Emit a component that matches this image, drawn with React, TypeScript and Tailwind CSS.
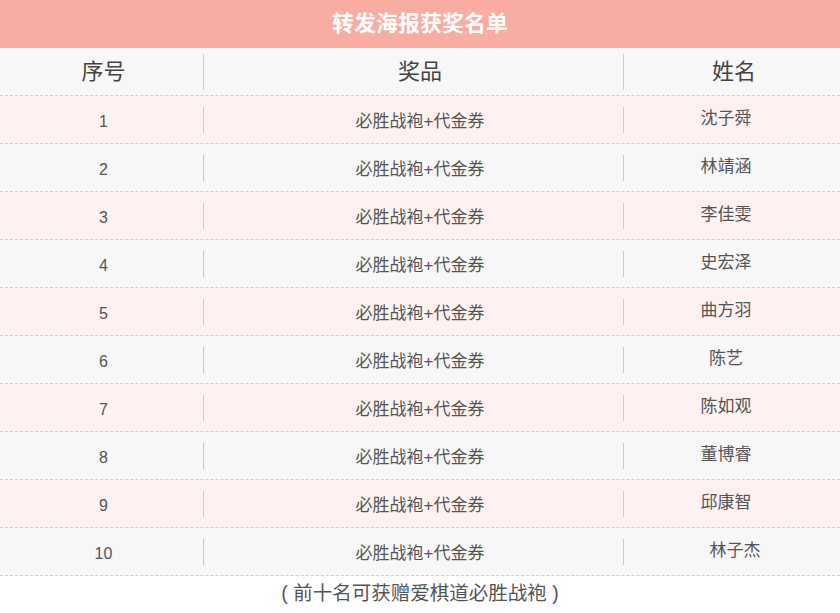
import React from "react";

const names = ["沈子舜", "林靖涵", "李佳雯", "史宏泽", "曲方羽", "陈艺", "陈如观", "董博睿", "邱康智", "林子杰"];

export default function App() {
  return (
    <div
      className="w-[840px] h-[613px] bg-white overflow-hidden"
      style={{ fontFamily: '"Liberation Sans", "Noto Sans CJK SC", sans-serif' }}
    >
      <div className="h-[48px] bg-[#f8aca2] flex items-center justify-center">
        <span className="text-white font-bold text-[22px] leading-none">转发海报获奖名单</span>
      </div>
      <div className="h-[48px] bg-[#f7f7f7] flex items-center border-b border-dashed border-[#cfcfcf] text-[#444] text-[22px]">
        <div className="w-[203px] flex justify-center pl-[4px]">序号</div>
        <span className="w-px h-[36px] bg-[#cccccc]" />
        <div className="w-[419px] flex justify-center pl-[13px]">奖品</div>
        <span className="w-px h-[36px] bg-[#cccccc]" />
        <div className="flex-1 flex justify-center pl-[4px]">姓名</div>
      </div>
      {names.map((n, i) => (
        <div
          key={i}
          className={
            "h-[48px] flex items-center border-b border-dashed border-[#cfcfcf] text-[#555] text-[17px] " +
            (i % 2 === 0 ? "bg-[#fdf2f1]" : "bg-[#f7f7f7]")
          }
        >
          <div className="w-[203px] flex justify-center pt-[5px] pl-[4px] text-[16px]">{i + 1}</div>
          <span className="w-px h-[26px] bg-[#cccccc]" />
          <div className="w-[419px] flex justify-center pt-[5px] pl-[13px]">必胜战袍+代金券</div>
          <span className="w-px h-[26px] bg-[#cccccc]" />
          <div className="flex-1 flex justify-center pb-[2px]">
            <span className={i === 9 ? "ml-[6px]" : "mr-[12px]"}>{n}</span>
          </div>
        </div>
      ))}
      <div className="h-[36px] flex items-center justify-center text-[#555] text-[19.5px]">
        <span>(&nbsp;前十名可获赠爱棋道必胜战袍&nbsp;)</span>
      </div>
    </div>
  );
}
